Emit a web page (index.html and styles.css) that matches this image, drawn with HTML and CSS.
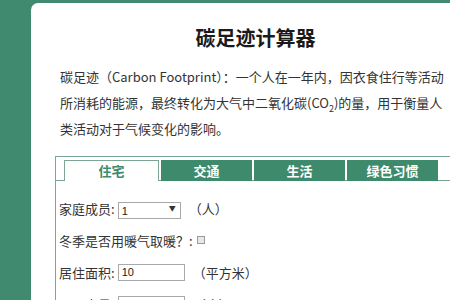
FILE: index.html
```
<!DOCTYPE html>
<html lang="zh-CN">
<head>
    <meta charset="UTF-8">
    <meta name="viewport" content="width=device-width, initial-scale=1.0">
    <title>碳足迹计算器</title>

    <link rel="stylesheet" href="styles.css">
</head>
<body>
    <main class="card">
        <h1 class="title">碳足迹计算器</h1>
        <p class="intro">碳足迹（Carbon Footprint）：一个人在一年内，因衣食住行等活动<br>所消耗的能源，最终转化为大气中二氧化碳(CO<sub>2</sub>)的量，用于衡量人<br>类活动对于气候变化的影响。</p>

        <div class="calc">
            <div class="tabs">
                <span class="tab active">住宅</span>
                <span class="tab">交通</span>
                <span class="tab">生活</span>
                <span class="tab">绿色习惯</span>
            </div>
            <div class="calc-body">
                <div class="row">
                    <span>家庭成员:</span>
                    <span class="select-wrap">
                        <select class="field select">
                            <option>1</option>
                            <option>2</option>
                            <option>3</option>
                        </select>
                    </span>
                    <span class="unit">（人）</span>
                </div>
                <div class="row">
                    <span>冬季是否用暖气取暖？:</span>
                    <input type="checkbox" class="check">
                </div>
                <div class="row">
                    <span>居住面积:</span>
                    <input type="text" class="field" value="10">
                    <span class="unit">（平方米）</span>
                </div>
                <div class="row">
                    <span>月用电量:</span>
                    <input type="text" class="field" value="">
                    <span class="unit">（度）</span>
                </div>
            </div>
        </div>
    </main>
</body>
</html>
```

FILE: styles.css
```
* {
    padding: 0;
    margin: 0;
    box-sizing: border-box;
}

html, body {
    overflow: hidden;
}

body {
    background-color: #408b6f;
    min-height: 100vh;
    padding: 3px 0 0 31px;
    font-family: "Noto Sans CJK SC", "Liberation Sans", sans-serif;
    color: #333;
}

.card {
    background-color: white;
    width: 449px;
    min-height: 320px;
    border-radius: 7px 0 0 0;
    padding: 21px 0 0 24px;
}

.title {
    font-size: 20px;
    line-height: 28px;
    font-weight: bold;
    color: #1a1a1a;
    text-align: center;
    margin-left: -24px;
}

.intro {
    font-size: 13px;
    line-height: 26px;
    margin: 12px 0 0 5px;
    white-space: nowrap;
}

.intro sub {
    font-size: 9px;
    line-height: 0;
}

.calc {
    margin-top: 14px;
    border: 1px solid #7aa794;
    border-right: none;
    min-height: 200px;
}

.tabs {
    display: flex;
    align-items: flex-end;
    gap: 2px;
    padding: 3px 0 0 8px;
    border-bottom: 1px solid #7aa794;
}

.tab {
    width: 91px;
    height: 21px;
    margin-bottom: -1px;
    background-color: #3e8a6d;
    color: white;
    font-size: 13px;
    font-weight: bold;
    line-height: 21px;
    text-align: center;
}

.tab.active {
    width: 95px;
    background-color: white;
    color: #3e8a6d;
    border: 1px solid #7aa794;
    border-bottom: none;
    line-height: 19px;
}

.calc-body {
    padding: 18px 0 0 3px;
    display: flex;
    flex-direction: column;
    gap: 14px;
}

.row {
    display: flex;
    align-items: center;
    height: 18px;
    font-size: 13px;
}

.field {
    width: 67px;
    height: 17px;
    margin-left: 3px;
    border: 1px solid #a9a9a9;
    background-color: white;
    font-family: "Liberation Sans", sans-serif;
    font-size: 11px;
    color: #222;
    padding: 0 3px;
    outline: none;
}

.select-wrap {
    position: relative;
    display: inline-block;
    height: 17px;
}

.select {
    width: 63px;
    appearance: none;
    -webkit-appearance: none;
    border-radius: 0;
}

.select-wrap::after {
    content: "▼";
    position: absolute;
    right: 5px;
    top: 3px;
    font-size: 7px;
    color: #333;
    pointer-events: none;
}

.unit {
    margin-left: 8px;
}

.check {
    appearance: none;
    -webkit-appearance: none;
    width: 8px;
    height: 8px;
    margin-left: 4px;
    border: 1px solid #9a9a9a;
    background-color: #e8e8e8;
}
```
